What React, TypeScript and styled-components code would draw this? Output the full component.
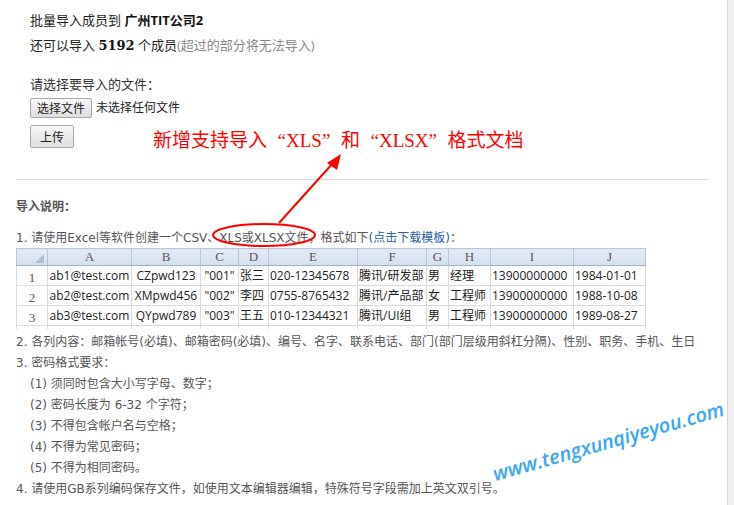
import styled, { createGlobalStyle } from 'styled-components';

const GlobalStyle = createGlobalStyle`
  html, body {
    margin: 0;
    padding: 0;
    background: #efefef;
  }
  body {
    font-family: "Open Sans", "Noto Sans CJK SC", sans-serif;
    font-size: 13px;
    color: #222;
  }
`;

interface IMember {
  email: string;
  pwd: string;
  code: string;
  name: string;
  tel: string;
  dept: string;
  sex: string;
  title: string;
  mobile: string;
  birth: string;
}

const columns: { key: string; width: number; align: 'left' | 'center' }[] = [
  { key: 'A', width: 84, align: 'center' },
  { key: 'B', width: 69, align: 'center' },
  { key: 'C', width: 38, align: 'center' },
  { key: 'D', width: 30, align: 'left' },
  { key: 'E', width: 89, align: 'left' },
  { key: 'F', width: 69, align: 'left' },
  { key: 'G', width: 22, align: 'left' },
  { key: 'H', width: 42, align: 'left' },
  { key: 'I', width: 83, align: 'left' },
  { key: 'J', width: 72, align: 'left' },
];

const members: IMember[] = [
  {
    email: 'ab1@test.com',
    pwd: 'CZpwd123',
    code: '"001"',
    name: '张三',
    tel: '020-12345678',
    dept: '腾讯/研发部',
    sex: '男',
    title: '经理',
    mobile: '13900000000',
    birth: '1984-01-01',
  },
  {
    email: 'ab2@test.com',
    pwd: 'XMpwd456',
    code: '"002"',
    name: '李四',
    tel: '0755-8765432',
    dept: '腾讯/产品部',
    sex: '女',
    title: '工程师',
    mobile: '13900000000',
    birth: '1988-10-08',
  },
  {
    email: 'ab3@test.com',
    pwd: 'QYpwd789',
    code: '"003"',
    name: '王五',
    tel: '010-12344321',
    dept: '腾讯/UI组',
    sex: '男',
    title: '工程师',
    mobile: '13900000000',
    birth: '1989-08-27',
  },
];

const rules: string[] = [
  '(1) 须同时包含大小写字母、数字；',
  '(2) 密码长度为 6-32 个字符；',
  '(3) 不得包含帐户名与空格；',
  '(4) 不得为常见密码；',
  '(5) 不得为相同密码。',
];

const SampleSheet = () => (
  <StyledSheet>
    <colgroup>
      <col style={{ width: 31 }} />
      {columns.map((col) => (
        <col key={col.key} style={{ width: col.width }} />
      ))}
    </colgroup>
    <thead>
      <tr>
        <StyledCorner>
          <StyledCornerMark />
        </StyledCorner>
        {columns.map((col) => (
          <StyledColHead key={col.key}>{col.key}</StyledColHead>
        ))}
      </tr>
    </thead>
    <tbody>
      {members.map((m: IMember, index: number) => {
        const values = [
          m.email,
          m.pwd,
          m.code,
          m.name,
          m.tel,
          m.dept,
          m.sex,
          m.title,
          m.mobile,
          m.birth,
        ];
        return (
          <tr key={index}>
            <StyledRowHead>{index + 1}</StyledRowHead>
            {values.map((v, i) => (
              <StyledCell key={i} $align={columns[i].align}>
                {v}
              </StyledCell>
            ))}
          </tr>
        );
      })}
      <tr>
        <StyledStubCell />
        {columns.map((col) => (
          <StyledStubCell key={col.key} />
        ))}
      </tr>
    </tbody>
  </StyledSheet>
);

const Annotations = () => (
  <>
    <StyledCallout>
      新增支持导入<StyledQuote $side="open">“</StyledQuote>XLS
      <StyledQuote $side="close">”</StyledQuote>和
      <StyledQuote $side="open">“</StyledQuote>XLSX
      <StyledQuote $side="close">”</StyledQuote>格式文档
    </StyledCallout>
    <StyledMarks width="734" height="505" viewBox="0 0 734 505">
      <ellipse
        cx="264"
        cy="235"
        rx="51"
        ry="11"
        fill="none"
        stroke="#f00"
        strokeWidth="2"
      />
      <line x1="279" y1="223" x2="333" y2="163" stroke="#f00" strokeWidth="2" />
      <polygon points="341,154 327,163 337,170" fill="#f00" />
    </StyledMarks>
    <StyledWatermark>www.tengxunqiyeyou.com</StyledWatermark>
  </>
);

const App = () => {
  return (
    <>
      <GlobalStyle />
      <StyledPage>
        <StyledPanel>
          <StyledSummary>
            <StyledLine>
              批量导入成员到 <strong>广州TIT公司2</strong>
            </StyledLine>
            <StyledQuota>
              还可以导入 <StyledCount>5192</StyledCount> 个成员
              <StyledMuted>(超过的部分将无法导入)</StyledMuted>
            </StyledQuota>
            <StyledPrompt>请选择要导入的文件：</StyledPrompt>
            <StyledFileRow>
              <StyledButton $height={20} $pad={6}>
                选择文件
              </StyledButton>
              <span>未选择任何文件</span>
            </StyledFileRow>
            <StyledUploadRow>
              <StyledButton $height={23} $pad={9}>
                上传
              </StyledButton>
            </StyledUploadRow>
          </StyledSummary>

          <StyledDivider />

          <StyledNotes>
            <StyledNotesTitle>导入说明：</StyledNotesTitle>
            <StyledNoteLead>
              1. 请使用Excel等软件创建一个CSV、XLS或XLSX文件，格式如下
              <StyledLink>(点击下载模板)</StyledLink>：
            </StyledNoteLead>
            <SampleSheet />
            <StyledNoteItems>
              <StyledNote>
                2. 各列内容：邮箱帐号(必填)、邮箱密码(必填)、编号、名字、联系电话、部门(部门层级用斜杠分隔)、性别、职务、手机、生日
              </StyledNote>
              <StyledNote>3. 密码格式要求：</StyledNote>
              {rules.map((rule: string, index: number) => (
                <StyledNote key={index} $indent>
                  {rule}
                </StyledNote>
              ))}
              <StyledNote>
                4. 请使用GB系列编码保存文件，如使用文本编辑器编辑，特殊符号字段需加上英文双引号。
              </StyledNote>
            </StyledNoteItems>
          </StyledNotes>

          <Annotations />
        </StyledPanel>
      </StyledPage>
    </>
  );
};

export default App;

/** STYLED COMPONENTS  **/

const StyledPage = styled.div`
  display: flex;
  min-height: 505px;
  background: #efefef;
`;

const StyledPanel = styled.div`
  position: relative;
  box-sizing: border-box;
  width: 728px;
  height: 505px;
  overflow: hidden;
  padding: 0 18px 0 16px;

  background: #fff;
  border-right: 1px solid #d6d6d6;
`;

const StyledSummary = styled.div`
  display: flex;
  flex-direction: column;
  align-items: flex-start;
  padding: 10px 0 0 14px;

  font-size: 13px;
  color: #222;
`;

const StyledLine = styled.div`
  line-height: 20px;

  strong {
    font-weight: 700;
    color: #111;
  }
`;

const StyledQuota = styled(StyledLine)`
  margin-top: 5px;
`;

const StyledCount = styled.b`
  font-family: "DejaVu Serif", "Liberation Serif", serif;
  font-size: 13px;
  color: #111;
`;

const StyledMuted = styled.span`
  color: #888;
`;

const StyledPrompt = styled(StyledLine)`
  margin-top: 18px;
  color: #333;
`;

const StyledFileRow = styled.div`
  display: flex;
  align-items: center;
  gap: 4px;
  margin-top: 4px;

  font-size: 12px;
  line-height: 20px;
`;

const StyledUploadRow = styled.div`
  display: flex;
  align-items: center;
  margin-top: 7px;
`;

const StyledButton = styled.button<{ $height: number; $pad: number }>`
  box-sizing: border-box;
  height: ${(p) => p.$height}px;
  padding: 0 ${(p) => p.$pad}px;

  font-family: "Noto Sans CJK SC", sans-serif;
  font-size: 12px;
  line-height: 1;
  color: #222;

  background: linear-gradient(#f8f8f8, #dedede);
  border: 1px solid #a6a6a6;
  border-radius: 2px;
`;

const StyledDivider = styled.hr`
  margin: 31px 0 0;
  border: none;
  border-top: 1px solid #dcdcdc;
`;

const StyledNotes = styled.div`
  display: flex;
  flex-direction: column;
  align-items: flex-start;

  font-family: "DejaVu Sans", "Noto Sans CJK SC", sans-serif;
  font-size: 12px;
  color: #555;
`;

const StyledNotesTitle = styled.div`
  margin-top: 17px;
  line-height: 20px;
  font-weight: 700;
`;

const StyledNoteLead = styled.div`
  margin-top: 11px;
  line-height: 20px;
`;

const StyledLink = styled.span`
  color: #2b5ea8;
`;

const StyledSheet = styled.table`
  table-layout: fixed;
  width: 629px;
  border-collapse: collapse;

  font-family: "Open Sans", "Noto Sans CJK SC", sans-serif;
  font-size: 12px;
  color: #222;
`;

const StyledColHead = styled.th`
  height: 16px;
  padding: 0;

  font-family: "Liberation Serif", "DejaVu Serif", serif;
  font-size: 13px;
  font-weight: 400;
  line-height: 16px;
  color: #555;
  text-align: center;

  background: linear-gradient(#e4ebf5, #d5e0ee);
  border: 1px solid #b6c6dc;
  border-bottom-color: #9fb3cf;
`;

const StyledCorner = styled(StyledColHead)`
  position: relative;
`;

const StyledCornerMark = styled.span`
  position: absolute;
  right: 3px;
  bottom: 2px;
  width: 0;
  height: 0;
  border-left: 9px solid transparent;
  border-bottom: 9px solid #b3bfcf;
`;

const StyledRowHead = styled.td`
  box-sizing: border-box;
  height: 20px;
  padding: 4px 0 0;

  font-family: "Liberation Serif", "DejaVu Serif", serif;
  font-size: 13px;
  line-height: 15px;
  color: #555;
  text-align: center;

  border: 1px solid #d6dde8;
`;

const StyledCell = styled.td<{ $align: 'left' | 'center' }>`
  box-sizing: border-box;
  height: 20px;
  padding: 0 1px;
  overflow: hidden;
  white-space: nowrap;

  line-height: 18px;
  text-align: ${(p) => p.$align};

  border: 1px solid #dadada;
`;

const StyledStubCell = styled.td`
  height: 3px;
  padding: 0;
  border-left: 1px solid #dadada;
  border-right: 1px solid #dadada;
`;

const StyledNoteItems = styled.div`
  display: flex;
  flex-direction: column;
  margin-top: 3px;
`;

const StyledNote = styled.div<{ $indent?: boolean }>`
  padding-left: ${(p) => (p.$indent ? 14 : 0)}px;
  line-height: 21px;
  white-space: nowrap;
`;

const StyledCallout = styled.div`
  position: absolute;
  top: 129px;
  left: 153px;

  font-family: "Liberation Serif", "Noto Sans CJK SC", serif;
  font-size: 19px;
  line-height: 24px;
  color: #f00;
  white-space: nowrap;
`;

const StyledQuote = styled.span<{ $side: 'open' | 'close' }>`
  display: inline-block;
  width: 19px;
  text-align: ${(p) => (p.$side === 'open' ? 'right' : 'left')};
  font-family: "Liberation Serif", serif;
`;

const StyledMarks = styled.svg`
  position: absolute;
  top: 0;
  left: 0;
  pointer-events: none;
`;

const StyledWatermark = styled.div`
  position: absolute;
  left: 497px;
  top: 461px;
  transform: rotate(-16deg);
  transform-origin: 0 100%;

  font-family: "Open Sans", "Noto Sans", sans-serif;
  font-size: 20px;
  font-style: italic;
  font-weight: 600;
  line-height: 26px;
  color: #3aa6f4;
  white-space: nowrap;
`;
